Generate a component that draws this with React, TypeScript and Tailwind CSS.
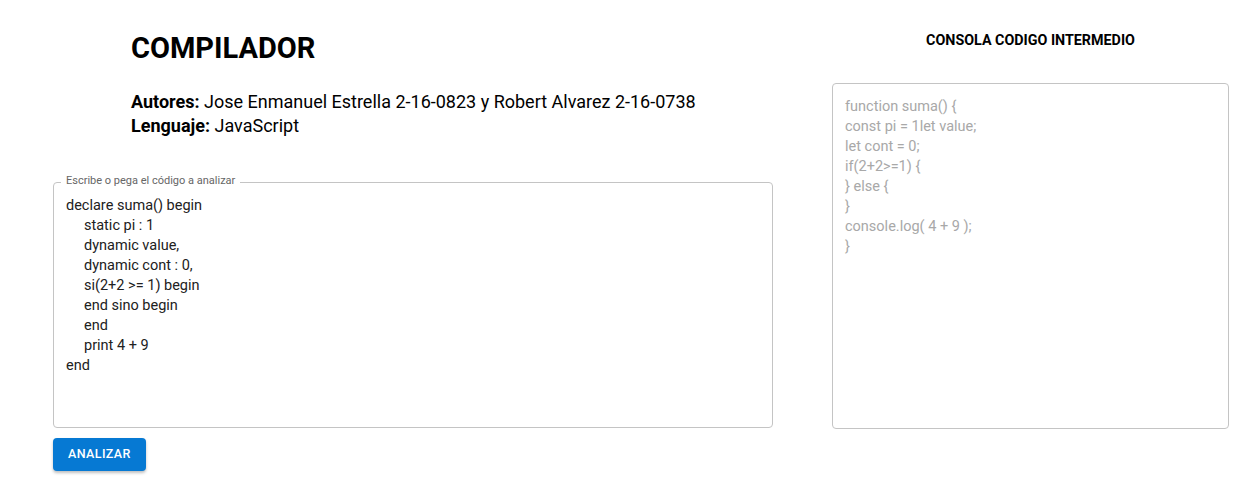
import React from 'react';

const sourceLines: { text: string; indent?: boolean }[] = [
  { text: 'declare suma() begin' },
  { text: 'static pi : 1', indent: true },
  { text: 'dynamic value,', indent: true },
  { text: 'dynamic cont : 0,', indent: true },
  { text: 'si(2+2 >= 1) begin', indent: true },
  { text: 'end sino begin', indent: true },
  { text: 'end', indent: true },
  { text: 'print 4 + 9', indent: true },
  { text: 'end' },
];

const outputLines = [
  'function suma() {',
  'const pi = 1let value;',
  'let cont = 0;',
  'if(2+2>=1) {',
  '} else {',
  '}',
  'console.log( 4 + 9 );',
  '}',
];

const App: React.FC = () => {
  return (
    <div className="min-h-[492px] bg-white font-['Roboto','Liberation_Sans',sans-serif] text-black">
      <div className="flex gap-[59px] pl-[53px] pr-[11px]">
        {/* Left: compiler input */}
        <div className="w-[720px]">
          <div className="pl-[78px] pt-[31px]">
            <h1 className="text-[29px] font-bold leading-[35px]">COMPILADOR</h1>
            <div className="mt-6 text-[18px] leading-6">
              <p>
                <span className="font-bold">Autores:</span> Jose Enmanuel Estrella 2-16-0823 y Robert Alvarez 2-16-0738
              </p>
              <p>
                <span className="font-bold">Lenguaje:</span> JavaScript
              </p>
            </div>
          </div>

          <div className="relative mt-[44px] h-[246px] rounded border border-[#c4c4c4] px-3 pt-[13px]">
            <span className="absolute -top-[9px] left-[7px] bg-white px-[5px] text-[11px] leading-[14px] text-[#666]">
              Escribe o pega el código a analizar
            </span>
            <div className="text-[14.5px] leading-5 text-[#212121]">
              {sourceLines.map((l, i) => (
                <div key={i} className={l.indent ? 'pl-[18px]' : ''}>
                  {l.text}
                </div>
              ))}
            </div>
          </div>

          <button className="mt-[10px] h-[33px] rounded bg-[#0679d3] px-[15px] text-[12.5px] font-medium tracking-[0.4px] text-white shadow-[0_2px_3px_rgba(0,0,0,0.25)]">
            ANALIZAR
          </button>
        </div>

        {/* Right: intermediate code console */}
        <div className="flex w-[397px] flex-col">
          <h2 className="pt-[30px] text-center text-[14.3px] font-bold leading-5">CONSOLA CODIGO INTERMEDIO</h2>
          <div className="mt-[33px] h-[346px] rounded border border-[#c4c4c4] px-3 pt-[13px]">
            <div className="text-[14.5px] leading-5 text-[#a8a8a8]">
              {outputLines.map((l, i) => (
                <div key={i}>{l}</div>
              ))}
            </div>
          </div>
        </div>
      </div>
    </div>
  );
};

export default App;
